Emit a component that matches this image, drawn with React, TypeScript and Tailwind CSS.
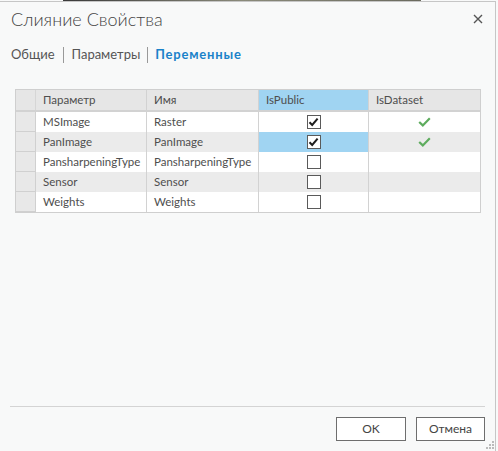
import React from "react";

const rows = [
  { param: "MSImage", name: "Raster", pub: true, ds: true, sel: false },
  { param: "PanImage", name: "PanImage", pub: true, ds: true, sel: true },
  { param: "PansharpeningType", name: "PansharpeningType", pub: false, ds: false, sel: false },
  { param: "Sensor", name: "Sensor", pub: false, ds: false, sel: false },
  { param: "Weights", name: "Weights", pub: false, ds: false, sel: false },
];

function CheckBox({ checked }: { checked: boolean }) {
  return (
    <span className="flex h-[14px] w-[14px] items-center justify-center border border-[#5a5a5a] bg-white">
      {checked && (
        <svg width="11" height="10" viewBox="0 0 11 10">
          <path d="M1.5 5.2 L4.2 8 L9.6 1.6" fill="none" stroke="#1e1e1e" strokeWidth="2" />
        </svg>
      )}
    </span>
  );
}

function GreenCheck() {
  return (
    <svg width="13" height="10" viewBox="0 0 13 10">
      <path d="M1.2 5 L4.8 8.4 L11.8 1.2" fill="none" stroke="#5eac5e" strokeWidth="2.2" />
    </svg>
  );
}

export default function App() {
  return (
    <div className="relative h-[451px] w-[498px] overflow-hidden bg-[#f8f9f9] font-['Segoe_UI','Lato',sans-serif] text-[#4e4e4e]">
      {/* полоска фона за диалогом */}
      <div className="flex h-[1px]">
        <div className="ml-[63px] h-[1px] w-[358px] bg-gradient-to-r from-[#3a3a3a] via-[#8a8a7a] to-[#6a6a5e]" />
      </div>

      <div className="mr-[2px] flex h-[450px] flex-col border-t border-r border-[#c6c6c6] bg-[#f8f9f9]">
        {/* Заголовок */}
        <div className="flex h-[34px] items-center justify-between pl-[11px] pr-[12px]">
          <span className="text-[18px] font-light text-[#444]">Слияние Свойства</span>
          <svg width="10" height="10" viewBox="0 0 10 10">
            <path d="M1 1 L9 9 M9 1 L1 9" stroke="#555" strokeWidth="1.4" />
          </svg>
        </div>

        {/* Вкладки */}
        <div className="mt-[10px] flex h-[18px] items-center pl-[11px] text-[13px]">
          <span className="text-[#555]">Общие</span>
          <span className="mx-[8px] h-[16px] w-px bg-[#999]" />
          <span className="text-[#555]">Параметры</span>
          <span className="mx-[7px] h-[16px] w-px bg-[#999]" />
          <span className="font-bold tracking-[0.8px] text-[#1a82c9]">Переменные</span>
        </div>

        {/* Таблица */}
        <div className="ml-[15px] mt-[25px] w-[466px] border border-[#cfcfcf] text-[11.5px]">
          <div className="grid h-[22px] grid-cols-[20px_111px_112px_110px_111px] border-b-2 border-[#d2d2d2] bg-[#e6e6e6]">
            <div className="border-r border-[#d6d6d6]" />
            <div className="flex items-center border-r border-[#d2d2d2] pl-[7px]">Параметр</div>
            <div className="flex items-center border-r border-[#d2d2d2] pl-[7px]">Имя</div>
            <div className="flex items-center border-r border-[#d2d2d2] bg-[#a0d4f2] pl-[7px]">IsPublic</div>
            <div className="flex items-center pl-[7px]">IsDataset</div>
          </div>
          {rows.map((r, i) => {
            const stripe = i % 2 === 1 ? "bg-[#ebebeb]" : "bg-white";
            return (
              <div key={r.param} className={`grid h-[20px] grid-cols-[20px_111px_112px_110px_111px] ${stripe}`}>
                <div className="border-r border-b border-[#d0d0d0] bg-[#e8e8e8]" />
                <div className="flex items-center border-r border-[#d2d2d2] pl-[7px]">{r.param}</div>
                <div className="flex items-center border-r border-[#d2d2d2] pl-[7px]">{r.name}</div>
                <div className={`flex items-center justify-center border-r border-[#d2d2d2] ${r.sel ? "bg-[#a0d4f2]" : ""}`}>
                  <CheckBox checked={r.pub} />
                </div>
                <div className="flex items-center justify-center">{r.ds && <GreenCheck />}</div>
              </div>
            );
          })}
        </div>

        <div className="flex-1" />

        {/* Низ */}
        <div className="mx-[10px] h-px bg-[#d4d4d4]" />
        <div className="flex h-[44px] items-start justify-end gap-[10px] pr-[10px] pt-[10px] text-[12px]">
          <button className="h-[24px] w-[70px] border border-[#6e6e6e] bg-white text-[#444]">OK</button>
          <button className="h-[24px] w-[69px] border border-[#6e6e6e] bg-white text-[#444]">Отмена</button>
        </div>
      </div>

      <div className="absolute bottom-[2px] right-[4px] grid grid-cols-3 gap-[1px]">
        <span />
        <span />
        <span className="h-[2px] w-[2px] bg-[#bbb]" />
        <span />
        <span className="h-[2px] w-[2px] bg-[#bbb]" />
        <span className="h-[2px] w-[2px] bg-[#bbb]" />
        <span className="h-[2px] w-[2px] bg-[#bbb]" />
        <span className="h-[2px] w-[2px] bg-[#bbb]" />
        <span className="h-[2px] w-[2px] bg-[#bbb]" />
      </div>
    </div>
  );
}
